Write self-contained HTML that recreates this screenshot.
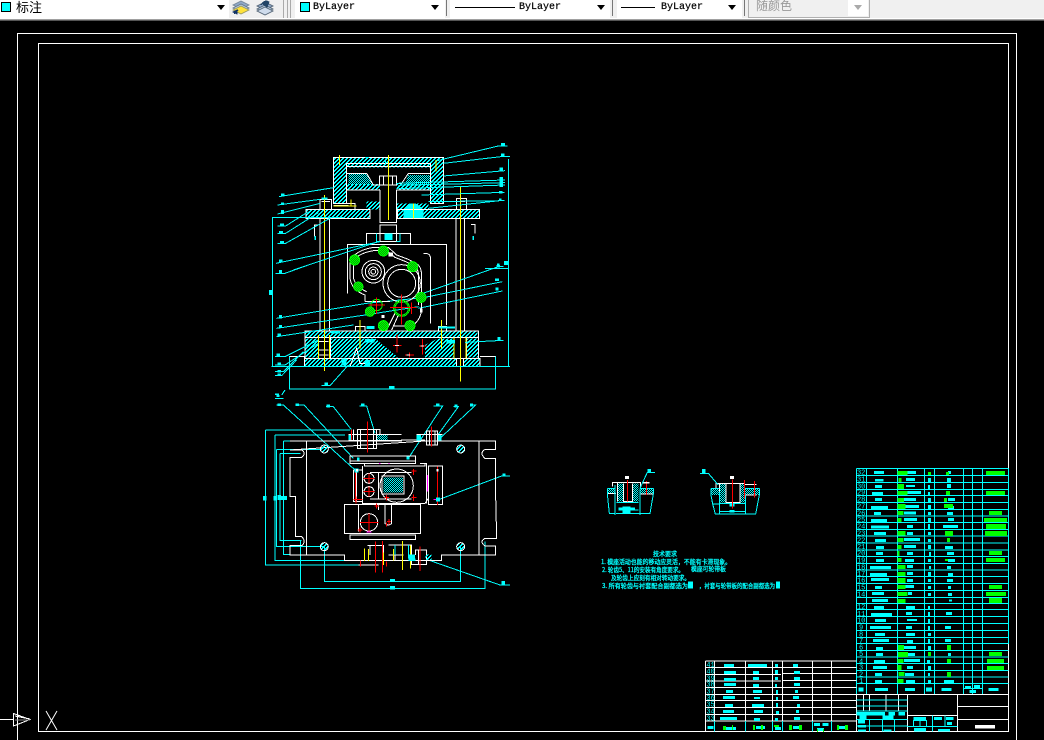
<!DOCTYPE html>
<html lang="zh"><head><meta charset="utf-8"><title>CAD</title>
<style>
html,body{margin:0;padding:0;background:#000;width:1044px;height:740px;overflow:hidden}
#tb{position:absolute;left:0;top:0;width:1044px;height:21px;background:#f0f0f0;font-family:"Liberation Sans","Noto Sans CJK SC",sans-serif}
#tb div{position:absolute}
.cb{top:0;height:18px;background:#fff}
.sw{width:8px;height:8px;top:2px;background:#0ff;border:1px solid #000}
.tx{font:10px/14px "Liberation Mono",monospace;color:#000;top:1px;-webkit-text-stroke:.2px #000}
.ar{width:0;height:0;border:4px solid transparent;border-top:5px solid #000;border-bottom:0;top:5px}
.ln{height:1px;background:#000;top:7px}
.sp{width:1px;height:16px;top:0;background:#777}
svg{position:absolute;left:0;top:0}
.w,.c,.y,.r,.g,.m{fill:none;stroke-width:3}
.w{stroke:#fff}.c{stroke:#0ff}.y{stroke:#ff0}.r{stroke:#f00}.g{stroke:#0f0}.m{stroke:#f0f}
.fc{fill:#0ff}.fg{fill:#0f0}.fw{fill:#fff}
.h{fill:url(#h)}.d{fill:url(#d)}
.gb{fill:url(#gb);stroke:#0f0;stroke-width:3}
.n{font:21px "Liberation Mono",monospace;fill:#0ff}
.t{font:6.5px "Noto Sans CJK SC",sans-serif;fill:#0ff;stroke:#0ff;stroke-width:.3}
</style></head><body>
<svg width="1044" height="740" viewBox="0 0 1044 740" shape-rendering="crispEdges">
<defs>
<pattern id="h" width="12" height="12" patternUnits="userSpaceOnUse"><path fill="#0ff" d="M0 9h3v3H0zM3 6h3v3H3zM6 3h3v3H6zM9 0h3v3H9zM3 9h3v3H3zM6 6h3v3H6zM9 3h3v3H9zM0 0h3v3H0z"/></pattern>
<pattern id="d" width="6" height="6" patternUnits="userSpaceOnUse"><rect width="3" height="3" fill="#0ff"/><rect x="3" y="3" width="3" height="3" fill="#0ff"/></pattern>
<pattern id="gb" width="6" height="6" patternUnits="userSpaceOnUse"><rect width="6" height="6" fill="#0a0"/><rect width="3" height="3" fill="#0f0"/><rect x="3" y="3" width="3" height="3" fill="#0f0"/></pattern>
</defs>
<g fill="none" stroke="#fff">
<path d="M17.5 740V33.5H1016.5V740"/>
<path d="M38.5 43.5H1008.5V731.5H38.5Z"/>
<path d="M0 719.5H13"/>
<path d="M13.5 713.5L30 719.5L13.5 726ZM15 716L30 719"/>
<path d="M46 711L57 730M57 711L46 730" shape-rendering="auto"/>
</g>
<path d="M15 720H30" stroke="#888" fill="none"/>

<!-- upper view top -->
<g transform="translate(265 140) scale(.333333)">
<path class="h" d="M205 53H535V83H205Z"/><path class="h" d="M205 72H245V190H205Z"/><path class="h" d="M497 72H535V190H497Z"/>
<path class="h" d="M245 132H345V150H245Z"/><path class="h" d="M395 132H497V150H395Z"/>
<path class="d" d="M250 102H305L325 135H250Z"/><path class="d" d="M430 105H495V135H420Z"/>
<path class="h" d="M123 208H315V235H123Z"/><path class="h" d="M397 208H643V235H397Z"/><path class="h" d="M305 185H345V208H305Z"/><path class="h" d="M395 190H490V208H395Z"/>
<path class="fc" d="M415 235V210Q445 170 475 210V235Z"/>
<path class="w" d="M205 53H535V190H497V70H245V190H205Z"/>
<path class="w" d="M245 80H497M245 100H305L325 135H345M495 100H430L410 130H395M245 150H345M395 150H495"/>
<path class="w" d="M345 150V248H395V150M343 135V108H395V135H343M355 108V135M383 108V135"/>
<path class="w" d="M123 208H315V235H123ZM397 208H643V235H397Z"/>
<path class="w" d="M165 208V178H200V208M575 208V175H605V208M170 185H195M580 185H600"/>
<path class="w" d="M205 190H270V208M205 197H250M497 190H535"/>
<path class="w" d="M165 235V390M193 235V390M573 235V390M598 235V390"/>
<path class="w" d="M345 255H395V305H345ZM305 313V280H437V313M247 390V313H545V390"/>
<path class="w" d="M148 290V255H158M618 253H630V280"/>
<path class="c" d="M335 280V305H345M405 280V305H395"/><path class="fc" d="M358 280H382V300H358Z"/>
<path class="y" d="M223 45V75M370 45V240M513 60V95M178 165V390M587 140V390M445 190V235M258 178V200M205 198H275"/>
<path class="fc" d="M170 172H188V178H170Z"/>
<path class="fc" d="M148 288h5v12h-5z"/><path class="fc" d="M622 288h5v12h-5z"/>
<path class="c" d="M516 62L700 18H728M535 70L708 50H735M535 108L720 92M395 130L720 120M400 136L720 128M400 146L720 135M470 165L718 157M490 185L718 182M490 205L705 182"/>
<path class="c" d="M42 170L205 143M38 195L165 178M38 222L165 190M38 258H62L130 215M38 280H62L160 218M38 310H62L200 232M33 370L345 305M85 390L325 310M660 385H730"/>
<path class="c" d="M22 390V232H235M730 390V57"/>
<path class="fc" d="M708 9h12v10h-12zM708 40h10v10h-10zM704 82h10v10h-10zM704 111h10v30h-10zM702 153h10v8h-10zM702 175h8v8h-8zM717 363h12v12h-12zM696 370h8v12h-8zM48 160h10v9h-10zM48 187h9v8h-9zM48 210h9v12h-9zM45 250h12v8h-12zM42 273h12v7h-12zM45 303h12v7h-12zM42 358h11v8h-11z"/>
<path class="c" d="M300 52h12M362 55v20"/>
</g>

<!-- upper view bottom -->
<g transform="translate(265 265) scale(.333333)">
<path class="h" d="M122 200H638V216H122Z"/><path class="h" d="M122 220H160V278H122Z"/><path class="h" d="M197 220H330L400 278H197Z"/><path class="h" d="M480 240L520 220H567V278H480Z"/><path class="h" d="M605 220H640V278H605Z"/>
<path class="h" d="M118 282H470V303H118Z"/><path class="h" d="M470 282H575V303H470Z"/><path class="h" d="M597 282H645V303H597Z"/>
<path class="w" d="M120 280V198H640V280M120 218H640M160 218V280M197 218V280M567 218V280M605 218V280"/>
<path class="w" d="M73 305V275H118V305M118 280H645V305H118ZM645 275H692V305H645M178 280V305M575 280V305M595 280V305"/>
<path class="w" d="M271 198V184H300V198M520 198V184H545V198M255 305L275 250L285 295H310"/>
<path class="w" d="M165 0V198M193 0V198M573 0V198M598 0V198"/>
<path class="w" d="M247 0V85M545 0V180"/>
<path class="w" d="M160 230H190M160 255H190M160 270H190M160 218V280"/>
<path class="y" d="M178 0V318M587 0V350M161 210V280M193 210V280M285 165V250M530 165V250M567 218V280M603 218V280"/>
<path class="fc" d="M305 183h23v9h-23zM198 198h27v7h-27zM300 222h28v10h-28zM520 184h50v6h-50zM545 225h25v10h-25zM230 280h15v22h-15zM300 285h15v18h-15z"/>
<path class="r" d="M384 242H410M396 208V262M462 243H485M472 222V268M420 270H447M433 262V278"/>
<path class="w" d="M390 242h12M467 243h10M425 270h10"/>
<path class="c" d="M32 25H60L130 0M35 160L305 115M305 115L455 100M460 90L700 5H715M35 190L300 150M300 150L460 125M465 100L712 50M35 215L265 180M460 130L712 78M30 275H60L160 225M30 300H60L160 235M30 320H55L115 260M30 332H50L95 285M170 362H195L250 300M600 232L715 226"/>
<path class="c" d="M20 305H735M22 0V305M730 0V305M73 275V372H692V275M60 375L50 390"/>
<path class="fc" d="M42 15h9v10h-9zM695 0h10v8h-10zM690 40h12v8h-12zM692 68h9v8h-9zM42 150h9v10h-9zM42 180h9v9h-9zM38 205h10v9h-10zM35 265h10v9h-10zM38 292h10v9h-10zM38 315h10v8h-10zM38 325h10v8h-10zM178 352h11v10h-11zM698 216h8v10h-8zM372 363h16v10h-16zM12 75h10v15h-10zM30 386h12v4h-12z"/>
</g>

<!-- gearbox detail -->
<g transform="translate(340 240) scale(.333333)">
<path class="w" d="M30 60Q50 30 100 22H145L170 45L205 58L235 75Q245 85 245 110V200Q245 240 215 258H160"/>
<path class="w" d="M40 62Q55 40 100 32H140L165 52L200 66L228 82Q236 92 236 110V195"/>
<path class="w" d="M30 60V115Q35 150 75 165V185M40 62V112Q45 140 80 155"/>
<path class="w" d="M250 40H258Q272 42 272 58V250M75 185H150"/>
<path class="w" d="M140 270L165 220M155 270L175 225"/>
<circle class="w" cx="100" cy="95" r="34"/><circle class="w" cx="100" cy="95" r="24"/><circle class="w" cx="100" cy="95" r="14"/><circle class="w" cx="100" cy="95" r="7"/>
<circle class="w" cx="185" cy="130" r="42"/><circle class="w" cx="185" cy="130" r="56"/>
<path class="fw" d="M145 38h14v12h-14zM125 225h9v9h-9zM240 205h8v12h-8z"/>
<circle class="g" cx="185" cy="205" r="24"/><circle class="g" cx="185" cy="205" r="20"/>
<circle class="g" cx="110" cy="195" r="17"/>
<circle class="gb" cx="44" cy="60" r="15"/><circle class="gb" cx="130" cy="33" r="15"/><circle class="gb" cx="218" cy="80" r="15"/><circle class="gb" cx="55" cy="140" r="14"/><circle class="gb" cx="243" cy="172" r="15"/><circle class="gb" cx="130" cy="257" r="15"/><circle class="gb" cx="210" cy="257" r="15"/><circle class="gb" cx="90" cy="215" r="14"/>
<path class="r" d="M85 195H135M110 172V222M150 203H230M185 163V253M215 188V222"/>
</g>

<!-- lower view -->
<g transform="translate(255 395) scale(.333333)">
<path class="c" d="M32 105V510H310M32 105H285M60 120V497H300M60 120H270M65 163V455H205M65 163H195M85 138V478H105M85 138H105M75 175V437H140M75 175H137M208 455V560H617V455M137 437V580H690V440"/>
<path class="fc" d="M24 303h10v14h-10zM55 303h10v14h-10zM68 300h10v15h-10zM78 303h18v12h-18zM405 552h15v8h-15zM405 573h15v11h-15z"/>
<path class="c" d="M65 30H85L300 225M122 30H147L295 190M213 35H235L290 105M313 33H335L360 115M535 33H563L460 190M595 35H610L550 118M645 30H662L555 130M765 243H740L548 315M520 495L735 570H765M60 10H85"/>
<path class="fc" d="M68 25h10v8h-10zM122 25h10v8h-10zM215 28h10v9h-10zM318 25h10v9h-10zM543 25h10v9h-10zM598 28h10v9h-10zM645 25h9v9h-9zM742 235h10v9h-10zM740 558h10v12h-10zM64 0h10v6h-10z"/>
<path class="w" d="M105 138H440V135H510M510 138H722V163H690Q672 175 690 190H722V305L725 430H690Q672 440 690 453H722V480H560V497H268V480H105V452H140Q155 440 140 425H122V305H105V187H140Q155 175 140 165H105Z"/>
<path class="w" d="M155 138V480M672 138V480"/>
<circle class="w h" cx="208" cy="162" r="12"/><circle class="w h" cx="617" cy="162" r="12"/><circle class="w h" cx="208" cy="455" r="12"/><circle class="w h" cx="617" cy="455" r="12"/>
<path class="w" d="M285 183H482V205H285ZM285 198H482M328 205V213H510V205"/>
<path class="w" d="M295 225V320H322M322 213V325H510L520 310V213M295 225H322M305 225V320M370 232V312M345 232H470M345 312H470"/>
<circle class="w" cx="342" cy="250" r="15"/><circle class="w" cx="342" cy="290" r="15"/><circle class="w" cx="425" cy="272" r="50"/>
<path class="d" d="M385 247H444V292H385Z"/><path class="w" d="M381 243H447V297H381Z"/>
<path class="w" d="M268 328H497V415H268ZM310 328V410M370 345V328M390 328V385Q400 395 410 385V328M285 420H482V433H285ZM520 213H563V328H520ZM495 205H515V325"/>
<circle class="w" cx="342" cy="382" r="26"/>
<path class="r" d="M302 225V320M547 215V330M342 235V265M325 250H358M342 275V305M325 290H358M342 355V410M315 382H370M470 228H485M476 222V240M470 308H485M476 298V318M388 308H402M395 300V316M295 313H322M303 305V325M395 395V382M396 380H408M402 372V388M308 405H322M315 398V412M358 333H372M365 326V340"/>
<path class="m" d="M518 240V290M535 313H550M335 411H350M372 205H376M400 205H404"/>
<path class="fc" d="M298 220h12v12h-12zM543 308h12v12h-12z"/><path class="fw" d="M303 222h6v8h-6zM545 222h6v8h-6z"/>
<path class="d" d="M366 118H398V137H366Z"/><path class="fc" d="M280 118h9v18h-9zM484 118h14v20h-14zM548 118h12v20h-12z"/>
<path class="w" d="M280 118H440M280 137H440M307 103H365V160H307ZM316 103V160M355 103V160M365 103H375V118M295 103V137M515 108H548V150H515ZM523 108V150M540 108V150M484 118H562M484 138H562"/>
<path class="r" d="M337 80V172M529 95V155M290 103V135"/>
<path class="w" d="M337 452H385V480M345 452V480M400 450H470V480M400 480H445M420 480V497M310 497H400M310 510H370M445 497H470V508H515V465H482V480"/>
<path class="y" d="M328 460V498M340 462V498M385 472V510M415 462V497M442 438V525M466 452V520"/>
<path class="r" d="M362 440V533M382 438V533M316 497V515M495 455V528M395 500V515"/>
<path class="h" d="M512 478h18v17h-18z"/><path class="fc" d="M460 478h20v18h-20zM460 490h22v8h-22z"/>
<path class="c" d="M420 450V480M460 450V490"/>
<path class="w" d="M490 465V508"/>
<path class="fc" d="M306 188h8v8h-8zM455 185h8v8h-8z"/>
</g>

<!-- detail views + text -->
<g transform="translate(590 460) scale(.333333)">
<path class="d" d="M82 70H100V125H82ZM128 70H145V125H128ZM52 86H75V102H52ZM152 86H190V102H152Z"/>
<path class="w" d="M67 80V68H152V80M100 70V125H128V70M52 100H78M152 102H190M82 68V125"/>
<path class="c" d="M52 86V102L58 160H75M190 86V102L180 160H150M75 75V165M150 85V165M78 160H150M85 150H145M80 127H145M52 86H75M152 86H190"/>
<path class="fc" d="M98 140h24v20h-24zM85 143h50v6h-50z"/>
<path class="r" d="M112 60V125M170 63V105"/>
<path class="fw" d="M105 48h12v9h-12zM158 66h20v5h-20z"/>
<path class="fc" d="M173 27h10v10h-10z"/><path class="c" d="M195 37H172L150 85"/>
<path class="d" d="M390 72H408V128H390ZM450 72H465V128H450ZM363 85H388V105H363ZM465 85H508V105H465Z"/>
<path class="w" d="M378 84V70H465M408 70V128H450V70M388 70V130M465 105H500M465 73H500"/>
<path class="c" d="M363 85V105L368 132H388M508 85V105L497 162H376L368 132M388 95V160M466 105V162M388 155H466M363 85H388M465 85H508M388 130H466"/>
<path class="fc" d="M418 130h16v10h-16zM418 150h16v8h-16z"/>
<path class="r" d="M427 58V145M463 60V115M493 63V113"/>
<path class="fw" d="M420 48h12v9h-12z"/>
<path class="fc" d="M336 27h11v13h-11z"/><path class="c" d="M330 40H355L385 75"/>
<path class="fc" d="M294 364h15v22h-15zM558 364h12v22h-12z"/>
</g>
<text class="t" x="653" y="556" textLength="24" lengthAdjust="spacingAndGlyphs">技术要求</text>
<text class="t" x="601" y="564" textLength="130" lengthAdjust="spacingAndGlyphs">1. 模座活动也能的移动应灵活，不能有卡滞现象。</text>
<text class="t" x="602" y="572" textLength="82" lengthAdjust="spacingAndGlyphs">2. 轮齿5、11的安装有角度要求。</text>
<text class="t" x="691" y="571" textLength="35" lengthAdjust="spacingAndGlyphs">模座可轮带板</text>
<text class="t" x="611" y="580" textLength="79" lengthAdjust="spacingAndGlyphs">及轮齿上应刻有相对转动要求。</text>
<text class="t" x="602" y="588" textLength="86" lengthAdjust="spacingAndGlyphs">3. 所有轮齿与衬套配合副都选为</text>
<text class="t" x="699" y="588" textLength="76" lengthAdjust="spacingAndGlyphs">，衬套与轮带板的配合副都选为</text>

<!-- parts list upper -->
<g transform="translate(850 460) scale(.333333)">
<path class="c" d="M20 25H475M20 46H475M20 67H475M20 88H475M20 106H475M20 127H475M20 148H475M20 168H475M20 187H475M20 208H475M20 228H475M20 249H475M20 270H475M20 289H475M20 310H475M20 330H475M20 350H475M20 371H475M20 392H475M20 412H475"/>
<path class="c" d="M20 25V420M49 25V420M142 25V420M223 25V420M253 25V420M340 25V420M367 25V420M397 25V420M475 25V420"/>
<path class="fc" d="M72 33h30v9h-30zM75 57h25v7h-25zM75 75h21v9h-21zM66 96h33v9h-33zM75 114h21v9h-21zM63 138h51v9h-51zM72 156h21v9h-21zM63 177h48v9h-48zM63 197h54v9h-54zM72 216h36v9h-36zM75 237h33v9h-33zM78 258h24v9h-24zM78 276h21v9h-21zM78 297h24v9h-24zM60 318h63v9h-63zM60 339h51v9h-51zM63 354h54v9h-54zM75 378h21v9h-21zM66 396h36v9h-36zM66 417h48v4h-48z"/>
<path class="fc" d="M165 33h33v9h-33zM168 54h27v9h-27zM168 75h27v6h-27zM156 93h57v9h-57zM162 114h36v9h-36zM165 135h42v9h-42zM162 155h36v9h-36zM162 174h39v9h-39zM171 195h18v9h-18zM171 216h18v9h-18zM162 234h48v9h-48zM162 255h36v9h-36zM171 276h18v9h-18zM165 297h27v9h-27zM171 315h18v9h-18zM171 336h18v9h-18zM171 357h18v9h-18zM165 375h27v9h-27zM174 396h12v9h-12z"/>
<path class="fg" d="M142 33h30v12h-30zM145 54h9v12h-9zM142 72h20v15h-20zM142 93h30v12h-30zM142 114h20v12h-20zM142 132h24v15h-24zM142 153h18v12h-18zM142 174h12v12h-12zM142 213h25v13h-25zM142 234h18v12h-18zM142 255h12v12h-12zM142 273h6v15h-6zM142 294h12v12h-12zM142 315h24v12h-24zM142 336h24v12h-24zM142 354h24v15h-24zM142 375h24v12h-24zM142 396h30v12h-30zM142 417h24v4h-24z"/>
<path class="fc" d="M234 54h9v12h-9zM234 75h6v12h-6zM234 96h6v9h-6zM234 114h9v12h-9zM234 135h9v12h-9zM234 156h9v9h-9zM234 174h9v12h-9zM234 192h6v15h-6zM234 216h9v9h-9zM234 237h9v9h-9zM234 255h9v12h-9zM237 276h6v12h-6zM234 297h9v9h-9zM237 318h6v9h-6zM234 336h9v12h-9zM234 357h9v9h-9zM234 378h9v9h-9zM234 399h9v9h-9z"/>
<path class="fg" d="M234 36h9v9h-9z"/>
<path class="fc" d="M294 33h9v9h-9zM291 54h12v12h-12zM291 72h12v12h-12zM294 114h21v9h-21zM294 138h18v9h-18zM291 156h18v9h-18zM294 174h18v9h-18zM279 195h45v9h-45zM285 258h24v9h-24zM291 276h21v9h-21zM294 297h21v9h-21zM291 318h12v9h-12zM294 339h15v9h-15zM291 357h18v9h-18zM294 378h9v9h-9zM294 399h12v9h-12z"/>
<path class="fg" d="M288 36h9v9h-9zM288 93h12v12h-12zM282 114h9v12h-9zM282 132h27v12h-27zM285 213h24v15h-24zM291 234h9v12h-9zM285 297h9v6h-9z"/>
<path class="fg" d="M408 33h57v12h-57zM408 93h57v12h-57zM417 153h39v12h-39zM402 174h69v12h-69zM408 192h60v15h-60zM405 213h66v15h-66zM417 273h39v12h-39zM408 294h57v12h-57zM417 375h39v12h-39zM408 396h60v12h-60zM417 414h39v7h-39z"/>
<g class="n"><text x="21" y="43">32</text><text x="21" y="64">31</text><text x="21" y="85">30</text><text x="21" y="104">29</text><text x="21" y="125">28</text><text x="21" y="145">27</text><text x="21" y="166">26</text><text x="21" y="186">25</text><text x="21" y="206">24</text><text x="21" y="226">23</text><text x="21" y="247">22</text><text x="21" y="267">21</text><text x="21" y="287">20</text><text x="21" y="307">19</text><text x="21" y="328">18</text><text x="21" y="348">17</text><text x="21" y="368">16</text><text x="21" y="389">15</text><text x="21" y="410">14</text></g>
</g>

<!-- parts list lower -->
<g transform="translate(850 600) scale(.333333)">
<path class="c" d="M20 10H475M20 28H475M20 49H475M20 70H475M20 91H475M20 112H475M20 131H475M20 151H475M20 171H475M20 191H475M20 211H475M20 231H475M20 251H475"/>
<path class="c" d="M20 0V283M49 0V283M142 0V283M223 0V283M253 0V283M340 0V283M367 0V283M397 0V283M475 0V131"/>
<path class="fc" d="M66 -2h48v8h-48zM72 18h30v9h-30zM63 39h63v9h-63zM75 57h33v9h-33zM60 78h63v9h-63zM75 99h30v9h-30zM69 117h48v9h-48zM78 141h21v9h-21zM78 159h21v9h-21zM72 180h33v9h-33zM69 198h42v9h-42zM75 219h21v9h-21zM75 240h21v9h-21z"/>
<path class="fc" d="M168 18h27v9h-27zM168 36h18v9h-18zM171 57h30v6h-30zM168 78h18v9h-18zM168 99h27v9h-27zM171 120h18v9h-18zM162 138h36v9h-36zM174 159h21v9h-21zM162 177h48v9h-48zM171 198h18v9h-18zM165 219h27v9h-27zM168 240h27v9h-27z"/>
<path class="fg" d="M142 -3h24v12h-24zM144 135h18v15h-18zM144 156h30v15h-30zM142 177h18v12h-18zM142 195h12v15h-12zM145 216h18v12h-18zM142 237h18v12h-18z"/>
<path class="fc" d="M234 18h6v9h-6zM234 36h6v12h-6zM234 57h6v12h-6zM234 78h6v12h-6zM234 99h9v9h-9zM234 117h6v12h-6zM234 138h9v12h-9zM231 180h9v12h-9zM234 198h9v12h-9zM234 219h6v9h-6zM234 240h9v9h-9z"/>
<path class="fg" d="M234 156h9v12h-9z"/>
<path class="fc" d="M297 -2h9v6h-9zM288 36h18v9h-18zM285 78h18v9h-18zM285 117h18v9h-18zM294 159h9v9h-9zM282 240h30v9h-30z"/>
<path class="fg" d="M291 135h12v15h-12zM291 177h12v12h-12zM291 216h12v15h-12z"/>
<path class="fg" d="M417 -3h39v12h-39zM417 156h39v12h-39zM411 177h51v12h-51zM411 198h51v12h-51z"/>
<g class="n"><text x="21" y="27">12</text><text x="21" y="48">11</text><text x="21" y="67">10</text><text x="27" y="88">9</text><text x="27" y="109">8</text><text x="27" y="129">7</text><text x="27" y="149">6</text><text x="27" y="168">5</text><text x="27" y="190">4</text><text x="27" y="209">3</text><text x="27" y="229">2</text><text x="27" y="249">1</text></g>
<path class="fc" d="M25 262h15v12h-15zM75 264h39v9h-39zM165 264h30v9h-30zM228 262h18v12h-18zM275 264h30v9h-30zM345 258h18v9h-18zM372 255h18v12h-18zM358 270h20v9h-20zM415 264h30v9h-30z"/>
<path class="c" d="M342 265H397"/>
<path class="w" d="M20 283H475V395H20ZM172 283V395M322 283V395M322 320H475M322 358H475M172 346H322"/>
<path class="w" d="M40 283V335M58 283V335M108 283V335M145 283V335"/>
<path class="c" d="M20 300H172M20 318H172M20 333H172M58 358V395M97 358V395M133 358V395M20 358H172M20 378H172M190 360V380M210 360V380M230 360V380M247 346V395M285 346V380M172 380H322"/>
<path class="fc" d="M20 336h85v11h-85zM115 336h20v10h-20zM145 336h20v10h-20zM28 347h21v13h-21zM97 347h33v13h-33zM24 360h21v10h-21zM24 375h24v8h-24zM24 388h24v7h-24zM100 388h24v7h-24zM190 351h38v12h-38zM252 351h24v9h-24zM288 351h22v9h-22zM291 366h15v9h-15zM192 384h36v10h-36zM264 387h36v8h-36z"/>
<path class="fw" d="M375 375h60v10h-60z"/>
</g>

<!-- secondary list -->
<g transform="translate(700 655) scale(.333333)">
<path class="w" d="M17 18H470M17 37H470M17 58H243M247 55H470M17 78H243M247 76H470M17 97H470M17 118H470M17 137H470M17 157H470M17 178H470M17 198H470M17 229H470"/>
<path class="w" d="M17 18V229M43 18V198M136 18V198M218 18V198M247 18V198M337 18V198M394 18V198"/>
<path class="c" d="M43 198V229M136 198V229M218 198V229M247 198V229M337 198V229M394 198V229"/>
<path class="fc" d="M72 27h30v9h-30zM72 48h36v9h-36zM72 69h36v9h-36zM72 84h36v9h-36zM78 105h21v9h-21zM69 123h36v9h-36zM75 147h24v9h-24zM69 165h33v9h-33zM60 186h51v9h-51z"/>
<path class="fc" d="M144 27h57v9h-57zM159 48h18v9h-18zM159 66h18v9h-18zM159 87h18v9h-18zM159 105h27v9h-27zM162 126h18v6h-18zM156 147h36v9h-36zM162 165h27v9h-27zM162 189h18v9h-18z"/>
<path class="fc" d="M225 27h9v9h-9zM225 45h9v12h-9zM225 66h9v9h-9zM225 87h6v9h-6zM228 105h6v12h-6zM228 126h6v9h-6zM228 144h6v12h-6zM228 168h9v9h-9zM225 189h9v9h-9z"/>
<path class="fc" d="M279 27h15v9h-15zM282 48h18v9h-18zM282 66h18v9h-18zM282 84h18v9h-18zM285 105h9v9h-9zM279 123h18v9h-18zM291 147h9v9h-9zM288 165h9v9h-9zM282 186h18v9h-18z"/>
<g class="n"><text x="19" y="36">41</text><text x="19" y="56">40</text><text x="19" y="76">39</text><text x="19" y="95">38</text><text x="19" y="115">37</text><text x="19" y="135">36</text><text x="19" y="155">35</text><text x="19" y="176">34</text><text x="19" y="196">33</text></g>
<path class="fc" d="M22 213h18v9h-18zM78 216h30v9h-30zM168 213h27v9h-27zM225 216h18v9h-18zM279 213h27v9h-27zM342 204h18v9h-18zM367 204h18v9h-18zM351 219h21v9h-21zM417 213h24v9h-24z"/>
<path class="fg" d="M69 213h9v12h-9zM96 210h3v15h-3zM159 210h6v15h-6zM183 210h6v15h-6zM222 210h15v6h-15zM267 210h9v15h-9zM297 210h9v15h-9zM351 222h3v9h-3zM369 222h3v9h-3zM411 210h6v15h-6zM435 210h9v15h-9z"/>
</g>
</svg>

<div id="tb">
<div style="left:0;top:18px;width:1044px;height:1px;background:#fff"></div>
<div style="left:0;top:19px;width:1044px;height:1px;background:#a0a0a0"></div>
<div style="left:0;top:20px;width:1044px;height:1px;background:#555"></div>
<div class="cb" style="left:0;width:229px"></div>
<div class="sw" style="left:1px"></div>
<div style="left:16px;top:0;font-size:13px;line-height:15px">标注</div>
<div class="ar" style="left:217px"></div>
<svg width="46" height="18" viewBox="0 0 46 18" style="left:231px;top:0" shape-rendering="crispEdges">
<path d="M2 5L10 1L18 5L10 9Z" fill="#8fa8c8" stroke="#789"/>
<path d="M2 8L10 4L18 8L10 12Z" fill="#b8cde0" stroke="#678"/>
<path d="M2 10L10 6L18 10L10 14Z" fill="#ffe23a" stroke="#996"/>
<path d="M2 12L6 10V14ZM3 14L7 10" fill="#136" stroke="#136"/>
<path d="M26 6L34 2L42 6L34 10Z" fill="#8fa8c8" stroke="#567"/>
<path d="M26 9L34 5L42 9L34 13Z" fill="#b8cde0" stroke="#567"/>
<path d="M26 11L34 7L42 11L34 15Z" fill="#cfdcec" stroke="#567"/>
<path d="M30 5Q34 -1 38 2L36 7L32 4" fill="#246" stroke="#246"/>
</svg>
<div style="left:283px;top:0;width:1px;height:18px;background:#aaa"></div>
<div style="left:287px;top:0;width:1px;height:18px;background:#aaa"></div>
<div style="left:290px;top:0;width:1px;height:18px;background:#aaa"></div>
<div class="cb" style="left:295px;width:150px"></div>
<div class="sw" style="left:300px"></div>
<div class="tx" style="left:313px">ByLayer</div>
<div class="ar" style="left:431px"></div>
<div class="sp" style="left:446px"></div>
<div class="cb" style="left:450px;width:160px"></div>
<div class="ln" style="left:455px;width:60px"></div>
<div class="tx" style="left:519px">ByLayer</div>
<div class="ar" style="left:597px"></div>
<div class="sp" style="left:612px"></div>
<div class="cb" style="left:617px;width:125px"></div>
<div class="ln" style="left:621px;width:34px"></div>
<div class="tx" style="left:661px">ByLayer</div>
<div class="ar" style="left:728px"></div>
<div class="sp" style="left:744px"></div>
<div style="left:748px;top:0;width:120px;height:17px;background:#f0f0f0;border:1px solid #b0b0b0;border-top:0"></div>
<div style="left:848px;top:0;width:20px;height:16px;background:#fff"></div>
<div style="left:756px;top:-1px;font-size:12px;line-height:14px;color:#999">随颜色</div>
<div class="ar" style="left:854px;border-top-color:#aaa"></div>
</div>
</body></html>
